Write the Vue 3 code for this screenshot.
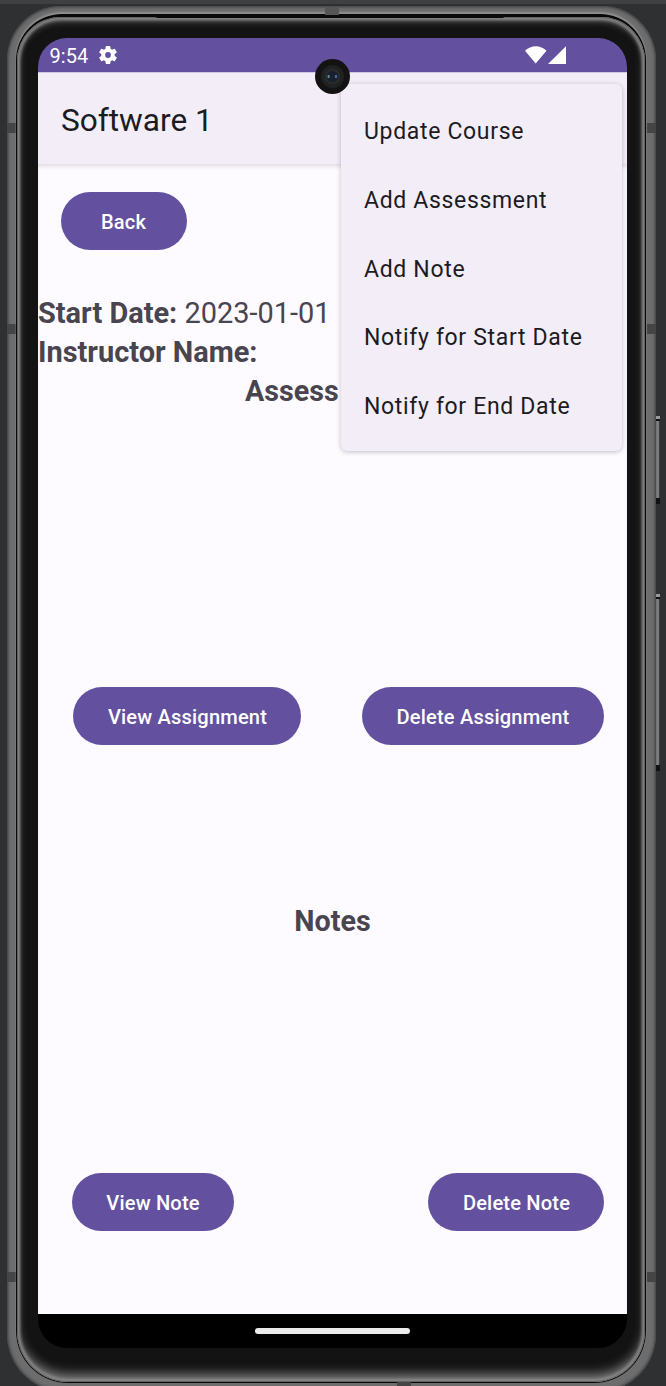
<script setup>
const menu = ['Update Course', 'Add Assessment', 'Add Note', 'Notify for Start Date', 'Notify for End Date']
</script>

<template>
  <div class="desk">
    <div class="rocker power"></div>
    <div class="rocker volume"></div>
    <div class="frame">
      <i class="band lt"></i><i class="band lm"></i><i class="band lb"></i>
      <i class="band rt"></i><i class="band rm"></i><i class="band rb"></i>
      <div class="seam">
        <i class="speaker"></i>
        <div class="bezel">
          <div class="screen">
            <div class="status">
              <span class="time">9:54</span>
              <svg class="gear" viewBox="2 2 20 20"><path fill="#fff" d="M19.43 12.98c.04-.32.07-.64.07-.98s-.03-.66-.07-.98l2.11-1.65a.5.5 0 0 0 .12-.64l-2-3.46a.5.5 0 0 0-.61-.22l-2.49 1a7.3 7.3 0 0 0-1.69-.98l-.38-2.65A.5.5 0 0 0 14 2h-4a.5.5 0 0 0-.49.42l-.38 2.65c-.61.25-1.17.59-1.69.98l-2.49-1a.5.5 0 0 0-.61.22l-2 3.46a.5.5 0 0 0 .12.64l2.11 1.65c-.04.32-.07.65-.07.98s.03.66.07.98l-2.11 1.65a.5.5 0 0 0-.12.64l2 3.46c.12.22.39.3.61.22l2.49-1c.52.4 1.08.73 1.69.98l.38 2.65c.03.24.24.42.49.42h4c.25 0 .46-.18.49-.42l.38-2.65a7.3 7.3 0 0 0 1.69-.98l2.49 1c.23.09.49 0 .61-.22l2-3.46a.5.5 0 0 0-.12-.64zM12 15.2a3.2 3.2 0 1 1 0-6.4 3.2 3.2 0 0 1 0 6.4z"/></svg>
              <svg class="signals" viewBox="0 0 42 18"><path fill="#fff" d="M0 4.8C6.2-1.2 15.3-1.2 21.5 4.8L10.7 17.6zM23 18 41 .2V18z"/></svg>
            </div>
            <header class="appbar">Software 1</header>
            <main class="content">
              <button class="back">Back</button>
              <p class="line start"><b>Start Date:</b> <span>2023-01-01</span></p>
              <p class="line"><b>Instructor Name:</b></p>
              <h2 class="heading assess">Assess</h2>
              <div class="row assignments">
                <button class="va">View Assignment</button>
                <button class="da">Delete Assignment</button>
              </div>
              <h2 class="heading notes">Notes</h2>
              <div class="row note-actions">
                <button class="vn">View Note</button>
                <button class="dn">Delete Note</button>
              </div>
            </main>
            <footer class="nav"><span></span></footer>
            <ul class="menu"><li v-for="m in menu" :key="m">{{ m }}</li></ul>
            <svg class="camera" viewBox="0 0 35 35">
              <circle cx="17.5" cy="17.5" r="17.5" fill="#131313"/>
              <circle cx="17.5" cy="17.5" r="11.5" fill="#202122"/>
              <circle cx="17.5" cy="17.5" r="8" fill="#292a2b"/>
              <circle cx="17.5" cy="17.5" r="5.6" fill="#17202b"/>
              <ellipse cx="13.6" cy="17.5" rx="1.1" ry="1.8" fill="#5e8f98"/>
              <ellipse cx="21" cy="17.5" rx="1.2" ry="1.8" fill="#5369a8"/>
            </svg>
          </div>
        </div>
      </div>
      <i class="band top"></i><i class="band bottom"></i>
    </div>
  </div>
</template>

<style>
html, body { margin: 0; background: #2e3032; }
</style>

<style scoped>
* { box-sizing: border-box; }
.desk { position: relative; width: 666px; height: 1386px; overflow: hidden; padding: 6px 0 0 7px; background: linear-gradient(#3e4042 4px, #2e3032 4px); font-family: Roboto, sans-serif; }
.frame { position: relative; width: 649px; height: 1386px; padding: 8px 9px 7px; border-radius: 54px 54px 58px 58px; background: #6d6d6d; box-shadow: inset 0 0 3px 1px #3b3b3b; }
.seam { position: relative; width: 630px; height: 1369px; padding: 3px 1px 1px; border-radius: 46px 46px 52px 52px; background: #080808; box-shadow: 0 -2px 2px #929292; }
.speaker { position: absolute; left: 139px; top: 1px; width: 350px; height: 3px; border-radius: 0 0 3px 3px; background: #0b0b0b; z-index: 1; }
.bezel { height: 1365px; border-radius: 44px 44px 51px 51px; padding: 21px 21px 33px 20px; background: #131313; box-shadow: inset 0 0 1px 1px #606060, inset 0 0 3px 3px #8a8a8a, inset 0 -9px 11px -1px #7c7c7c, inset 0 5px 7px -1px #656565; }
.screen { position: relative; width: 589px; height: 1310px; margin-left: 1px; margin-right: -1px; display: flex; flex-direction: column; }
.status { height: 34px; flex: none; border-radius: 29px 29px 0 0; background: #63519f; display: flex; align-items: center; color: #fff; padding-left: 11.5px; }
.time { font-size: 20px; width: 49px; line-height: 34px; padding-top: 2px; letter-spacing: .1px; }
.gear { width: 18px; height: 18px; }
.signals { width: 42px; height: 18px; margin-left: 408px; }
.appbar { height: 92px; flex: none; background: #f2edf7; color: #1c1b1f; padding: 3px 0 0 23px; line-height: 92px; font-size: 31.6px; box-shadow: inset 0 1px #d3cae0; }
.content { height: 1150px; flex: none; background: #fdfbff; padding-top: 28px; color: #49454f; box-shadow: inset 0 4px 4px -2px #dcd8df; }
button { display: block; border: 0; border-radius: 29px; height: 58px; padding: 2px 0 0; background: #63519f; color: #fff; font: 500 20.1px Roboto, sans-serif; letter-spacing: .17px; }
.back { width: 126px; margin-left: 23px; padding-right: 1px; }
.line { margin: 0; height: 39px; line-height: 39px; font-size: 28.95px; white-space: pre; }
.start { margin-top: 44px; }
.heading { margin: 0; height: 39px; line-height: 40px; font-size: 28.7px; text-align: center; font-weight: 700; }
.assess { text-align: left; padding-left: 207px; line-height: 39px; }
.row { display: flex; justify-content: space-between; }
.assignments { margin-top: 276px; padding: 0 23px 0 35px; }
.notes { margin-top: 156px; }
.note-actions { margin-top: 233px; padding: 0 23px 0 34px; }
.va { width: 228px; padding-left: 1px; } .da { width: 242px; } .vn { width: 162px; } .dn { width: 176px; padding-left: 1px; }
.vn, .dn { padding-top: 1px; }
.nav { height: 34px; background: #000; border-radius: 0 0 29px 29px; display: flex; justify-content: center; padding-top: 14px; }
.nav span { width: 155px; height: 6px; border-radius: 3px; background: #ebebeb; }
.menu { position: absolute; left: 303px; top: 46px; width: 281px; height: 367px; margin: 0; padding: 12px 0; list-style: none; background: #f2edf7; border-radius: 6px; color: #1c1b1f; font-size: 23px; letter-spacing: .67px; box-shadow: 0 1px 5px rgba(0,0,0,.24); }
.menu li { height: 68.8px; line-height: 71px; padding-left: 23px; white-space: nowrap; }
.camera { position: absolute; left: 277px; top: 21px; width: 35px; height: 35px; }
.band { position: absolute; background: #454545; width: 9px; height: 10px; }
.lt, .lm, .lb { left: 0; } .rt, .rm, .rb { right: 0; }
.lt, .rt { top: 117px; } .lm, .rm { top: 318px; } .lb, .rb { top: 1266px; }
.top { left: 318px; top: 1px; width: 14px; height: 9px; background: #565656; }
.bottom { left: 390px; bottom: 5px; width: 14px; height: 5px; }
.rocker { position: absolute; left: 655px; width: 5px; background: linear-gradient(90deg, #333, #888 40%, #777 70%, #222); border-top: 3px solid #999; border-bottom: 6px solid #111; }
.rocker::before { content: ''; display: block; height: 2px; background: #111; }
.power { top: 416px; height: 88px; } .volume { top: 594px; height: 177px; }
</style>
